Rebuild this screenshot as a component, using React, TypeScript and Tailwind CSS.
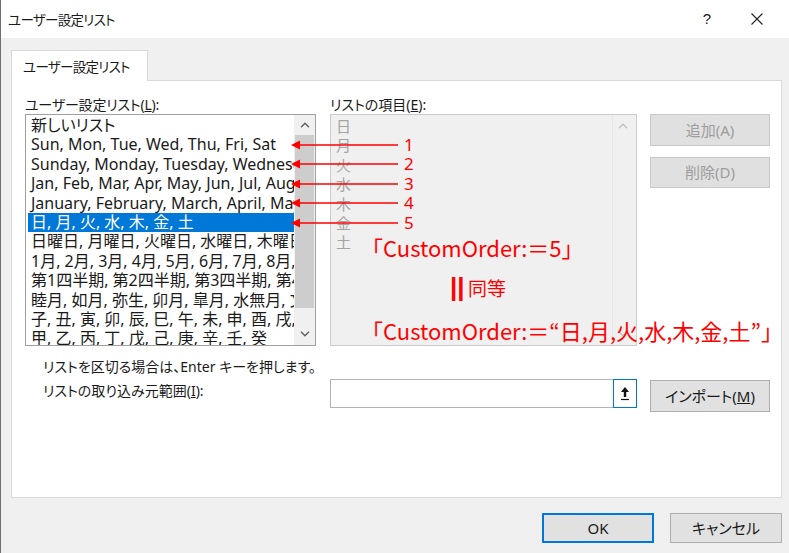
import React from 'react';

const leftItems = [
  '新しいリスト',
  'Sun, Mon, Tue, Wed, Thu, Fri, Sat',
  'Sunday, Monday, Tuesday, Wednesday, Thursday, Friday, Saturday',
  'Jan, Feb, Mar, Apr, May, Jun, Jul, Aug, Sep, Oct, Nov, Dec',
  'January, February, March, April, May, June, July, August, September, October, November, December',
  '日, 月, 火, 水, 木, 金, 土',
  '日曜日, 月曜日, 火曜日, 水曜日, 木曜日, 金曜日, 土曜日',
  '1月, 2月, 3月, 4月, 5月, 6月, 7月, 8月, 9月, 10月, 11月, 12月',
  '第1四半期, 第2四半期, 第3四半期, 第4四半期',
  '睦月, 如月, 弥生, 卯月, 皐月, 水無月, 文月, 葉月, 長月, 神無月, 霜月, 師走',
  '子, 丑, 寅, 卯, 辰, 巳, 午, 未, 申, 酉, 戌, 亥',
  '甲, 乙, 丙, 丁, 戊, 己, 庚, 辛, 壬, 癸',
];

const rightItems = ['日', '月', '火', '水', '木', '金', '土'];

// y of each red arrow (annotation 1..5)
const arrows = [145, 164, 184, 203, 223];

const Chevron = ({ up, color }: { up: boolean; color: string }) => (
  <svg width="10" height="6" viewBox="0 0 10 6">
    <path
      d={up ? 'M1 5.2 L5 1.2 L9 5.2' : 'M1 0.8 L5 4.8 L9 0.8'}
      fill="none"
      stroke={color}
      strokeWidth="1.4"
    />
  </svg>
);

const App: React.FC = () => {
  return (
    <div className="relative w-[789px] h-[553px] overflow-hidden bg-[#f0f0f0] border-l border-[#6e6e6e] text-[#1a1a1a] font-['Noto_Sans','Noto_Sans_CJK_JP',sans-serif] [font-feature-settings:'palt']">
      {/* title bar */}
      <div className="h-[38px] bg-white flex items-center pl-[7px]">
        <span className="text-[13.5px] tracking-[-0.7px] font-['Noto_Sans_CJK_JP',sans-serif]">ユーザー設定リスト</span>
        <span className="ml-auto mr-[40px] text-[15px] font-['Liberation_Sans',sans-serif]">?</span>
        <svg width="12" height="12" viewBox="0 0 12 12" className="mr-[26px]">
          <path d="M0.5 0.5 L11.5 11.5 M11.5 0.5 L0.5 11.5" stroke="#222" strokeWidth="1.1" />
        </svg>
      </div>

      {/* tab */}
      <div className="pt-[12px] pl-[10px]">
        <div className="relative z-10 -mb-[1px] w-[137px] h-[31px] bg-white border border-b-0 border-[#d9d9d9] flex items-center pl-[11px]">
          <span className="text-[13.5px] tracking-[-0.7px] font-['Noto_Sans_CJK_JP',sans-serif]">ユーザー設定リスト</span>
        </div>
      </div>

      {/* tab panel */}
      <div className="ml-[10px] w-[771px] h-[418px] bg-white border border-[#d9d9d9] pl-[13px] pt-[15px] text-[14px]">
        <div className="flex">
          {/* left list */}
          <div className="w-[291px]">
            <div className="h-[18px] leading-[18px] tracking-[-0.2px]">
              ユーザー設定リスト(<span className="underline">L</span>):
            </div>
            <div className="h-[232px] border border-[#a0a0a0] bg-white flex">
              <div className="flex-1 overflow-hidden pt-[1px] pl-[2px]">
                {leftItems.map((t, i) => (
                  <div
                    key={i}
                    className={`h-[19.4px] leading-[19.4px] pl-[3px] whitespace-nowrap text-[16px] ${
                      i === 5 ? 'bg-[#0078d7] text-white' : ''
                    }`}
                  >
                    {t}
                  </div>
                ))}
              </div>
              <div className="w-[21px] bg-[#f0f0f0] flex flex-col items-center">
                <div className="h-[20px] flex items-center">
                  <Chevron up color="#606060" />
                </div>
                <div className="w-[19px] h-[173px] bg-[#cdcdcd]" />
                <div className="flex-1" />
                <div className="h-[22px] flex items-center">
                  <Chevron up={false} color="#606060" />
                </div>
              </div>
            </div>
          </div>

          {/* right list */}
          <div className="ml-[14px] w-[307px]">
            <div className="h-[18px] leading-[18px]">
              リストの項目(<span className="underline">E</span>):
            </div>
            <div className="h-[232px] border border-[#cccccc] bg-[#f0f0f0] flex">
              <div className="flex-1 pt-[2px] pl-[5px] text-[#a3a3a3] text-[15px]">
                {rightItems.map((t) => (
                  <div key={t} className="h-[19.4px] leading-[19.4px]">
                    {t}
                  </div>
                ))}
              </div>
              <div className="w-[21px] mr-[3px] border-l border-[#e6e6e6] flex flex-col items-center">
                <div className="h-[22px] flex items-center">
                  <Chevron up color="#c2c2c2" />
                </div>
                <div className="flex-1" />
                <div className="h-[22px] flex items-center">
                  <Chevron up={false} color="#c2c2c2" />
                </div>
              </div>
            </div>
          </div>

          {/* side buttons */}
          <div className="ml-[13px] w-[120px] pt-[18px] text-[15px]">
            <div className="h-[32px] bg-[#e0e0e0] border border-[#c8c8c8] text-[#9c9c9c] flex items-center justify-center">
              追加(A)
            </div>
            <div className="mt-[11px] h-[31px] bg-[#e0e0e0] border border-[#c8c8c8] text-[#9c9c9c] flex items-center justify-center">
              削除(D)
            </div>
          </div>
        </div>

        {/* bottom area */}
        <div className="ml-[18px] mt-[12px] h-[18px] leading-[18px]">
          リストを区切る場合は、Enter キーを押します。
        </div>
        <div className="ml-[18px] mt-[3px] flex items-start">
          <div className="w-[287px] mt-[3px] h-[18px] leading-[18px]">
            リストの取り込み元範囲(<span className="underline">I</span>):
          </div>
          <div className="w-[307px] h-[29px] border border-[#b4b4b4] bg-white flex justify-end">
            <div className="-my-[1px] -mr-[1px] w-[24px] border border-[#0078d7] bg-white flex items-center justify-center">
              <svg width="10" height="15" viewBox="0 0 10 15">
                <path d="M5 1 L9 6 L6.2 6 L6.2 11 L3.8 11 L3.8 6 L1 6 Z" fill="#111" />
                <path d="M1 13.5 L9 13.5" stroke="#111" strokeWidth="1.2" />
              </svg>
            </div>
          </div>
          <div className="ml-[13px] mt-[1px] w-[120px] h-[32px] bg-[#e1e1e1] border border-[#adadad] flex items-center justify-center text-[15px]">
            インポート(<span className="underline">M</span>)
          </div>
        </div>
      </div>

      {/* footer */}
      <div className="mt-[15px] pr-[7px] flex justify-end gap-[16px] text-[15px]">
        <div className="w-[112px] h-[30px] bg-[#e1e1e1] border-2 border-[#0078d7] flex items-center justify-center">
          OK
        </div>
        <div className="w-[112px] h-[30px] bg-[#e1e1e1] border border-[#adadad] flex items-center justify-center">
          キャンセル
        </div>
      </div>

      {/* red annotation overlay */}
      <svg className="absolute left-0 top-0 pointer-events-none" width="789" height="553">
        {arrows.map((y) => (
          <g key={y}>
            <line x1="296" y1={y} x2="397" y2={y} stroke="#ff0000" strokeWidth="1.3" />
            <path d={`M290 ${y} L299 ${y - 4.5} L299 ${y + 4.5} Z`} fill="#ff0000" />
          </g>
        ))}
      </svg>
      {arrows.map((y, i) => (
        <span
          key={y}
          className="absolute left-[403px] text-[17px] leading-[20px] text-[#ff0000] font-['Noto_Sans',sans-serif]"
          style={{ top: y - 10 }}
        >
          {i + 1}
        </span>
      ))}
      <span className="absolute left-[360px] top-[232px] text-[22px] leading-[30px] text-[#ff0000] font-['Noto_Sans_CJK_JP',sans-serif] [font-feature-settings:normal] whitespace-nowrap">
        「CustomOrder:＝5」
      </span>
      <span className="absolute left-[449px] top-[273px] text-[26px] leading-[28px] font-bold text-[#ff0000] font-['Liberation_Sans',sans-serif]">
        ||
      </span>
      <span className="absolute left-[467px] top-[276px] text-[19px] leading-[24px] text-[#ff0000] font-['Noto_Sans_CJK_JP',sans-serif]">
        同等
      </span>
      <span className="absolute left-[360px] top-[315px] text-[22px] leading-[30px] text-[#ff0000] font-['Noto_Sans_CJK_JP',sans-serif] [font-feature-settings:normal] whitespace-nowrap">
        「CustomOrder:＝“日,月,火,水,木,金,土”」
      </span>
    </div>
  );
};

export default App;
